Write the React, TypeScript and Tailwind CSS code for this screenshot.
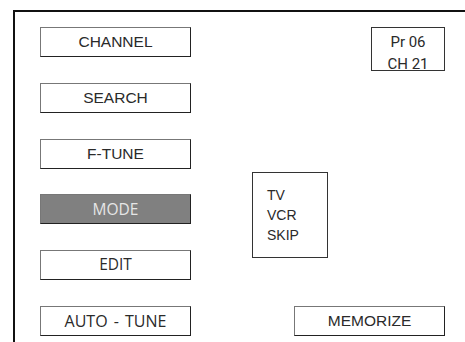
import React from "react";

const btnBase =
  "h-[30px] w-[151px] flex items-center justify-center border border-t-[#777] border-l-[#777] border-r-[#222] border-b-[#222]";

function Btn({ label, active, font, extra }: { label: string; active?: boolean; font?: string; extra?: string }) {
  return (
    <div
      className={
        btnBase +
        (active ? " bg-[#808080] text-[#e6e6e6]" : " bg-white text-[#2a2a2a]") +
        " text-[15.5px] leading-none" +
        (extra ? " " + extra : "")
      }
      style={{ fontFamily: font ?? '"Liberation Sans", Arial, sans-serif' }}
    >
      {label}
    </div>
  );
}

export default function App() {
  const os = '"Open Sans", "Liberation Sans", sans-serif';
  return (
    <div className="w-[465px] h-[342px] overflow-hidden bg-white pt-[10px] pl-[13px] flex">
      <div className="flex-1 flex border-l-2 border-t-2 border-[#111] pl-[25px] pt-[15px] pr-[20px] pb-[6px]">
        <div className="flex flex-col gap-[25.8px]">
          <Btn label="CHANNEL" />
          <Btn label="SEARCH" />
          <Btn label="F-TUNE" />
          <Btn label="MODE" active font={os} />
          <Btn label="EDIT" font={os} />
          <Btn label="AUTO - TUNE" font={os} extra="text-[16px] [word-spacing:2px]" />
        </div>
        <div className="flex-1 flex flex-col">
          <div
            className="self-end w-[74px] h-[44px] border border-[#333] pt-[3px] text-center text-[15px] leading-[22px] text-[#2a2a2a]"
            style={{ fontFamily: "Roboto, sans-serif" }}
          >
            <div>Pr 06</div>
            <div>CH 21</div>
          </div>
          <div
            className="ml-[61px] mt-[101px] w-[76px] h-[86px] border border-[#333] pl-[14px] pt-[12px] text-[14px] leading-[20px] text-[#2a2a2a]"
            style={{ fontFamily: '"Liberation Sans", Arial, sans-serif' }}
          >
            <div>TV</div>
            <div>VCR</div>
            <div>SKIP</div>
          </div>
          <div className="mt-auto self-end">
            <Btn label="MEMORIZE" />
          </div>
        </div>
      </div>
    </div>
  );
}
